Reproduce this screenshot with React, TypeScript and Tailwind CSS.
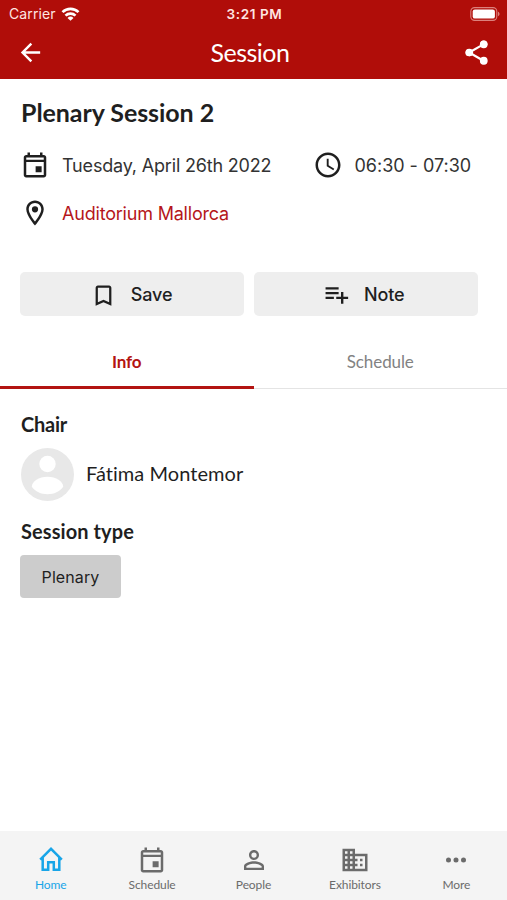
import type { ReactNode } from 'react';

const CALENDAR =
  'M19 4h-1V2h-2v2H8V2H6v2H5c-1.11 0-1.99.9-1.99 2L3 20c0 1.1.89 2 2 2h14c1.1 0 2-.9 2-2V6c0-1.1-.9-2-2-2zm0 16H5V9.6h14V20zm0-12.2H5V6h14v1.8zM12.5 13h4.8v4.8h-4.8V13z';
const PIN =
  'M12 2C8.13 2 5 5.13 5 9c0 5.25 7 13 7 13s7-7.75 7-13c0-3.87-3.13-7-7-7zM7 9c0-2.76 2.24-5 5-5s5 2.24 5 5c0 2.88-2.88 7.19-5 9.88C9.92 16.21 7 11.85 7 9zm5-2.5a2.5 2.5 0 1 0 0 5 2.5 2.5 0 0 0 0-5z';
const CLOCK =
  'M11.99 2C6.47 2 2 6.48 2 12s4.47 10 9.99 10C17.52 22 22 17.52 22 12S17.52 2 11.99 2zM12 20c-4.42 0-8-3.58-8-8s3.58-8 8-8 8 3.58 8 8-3.58 8-8 8zm.5-13H11v6l5.25 3.15.75-1.23-4.5-2.67V7z';
const BOOKMARK =
  'M17 3H7c-1.1 0-1.99.9-1.99 2L5 21l7-3 7 3V5c0-1.1-.9-2-2-2zm0 15l-5-2.18L7 18V5h10v13z';
const PLAYLIST_ADD =
  'M14 10H3v2h11v-2zm0-4H3v2h11V6zm4 8v-4h-2v4h-4v2h4v4h2v-4h4v-2h-4zM3 16h7v-2H3v2z';
const BACK = 'M20 11H7.83l5.59-5.59L12 4l-8 8 8 8 1.41-1.41L7.83 13H20v-2z';
const SHARE =
  'M18 16.08c-.76 0-1.44.3-1.96.77L8.91 12.7c.05-.23.09-.46.09-.7s-.04-.47-.09-.7l7.05-4.11c.54.5 1.25.81 2.04.81 1.66 0 3-1.34 3-3s-1.34-3-3-3-3 1.34-3 3c0 .24.04.47.09.7L8.04 9.81C7.5 9.31 6.79 9 6 9c-1.66 0-3 1.34-3 3s1.34 3 3 3c.79 0 1.5-.31 2.04-.81l7.12 4.16c-.05.21-.08.43-.08.65 0 1.61 1.31 2.92 2.92 2.92s2.92-1.31 2.92-2.92-1.31-2.92-2.92-2.92z';
const PERSON =
  'M12 5.9a2.1 2.1 0 1 1 0 4.2 2.1 2.1 0 0 1 0-4.2m0 9c2.97 0 6.1 1.46 6.1 2.1v1.1H5.9V17c0-.64 3.13-2.1 6.1-2.1M12 4C9.79 4 8 5.79 8 8s1.79 4 4 4 4-1.79 4-4-1.79-4-4-4zm0 9c-2.67 0-8 1.34-8 4v3h16v-3c0-2.66-5.33-4-8-4z';
const BUILDING =
  'M12 7V3H2v18h20V7H12zM6 19H4v-2h2v2zm0-4H4v-2h2v2zm0-4H4V9h2v2zm0-4H4V5h2v2zm4 12H8v-2h2v2zm0-4H8v-2h2v2zm0-4H8V9h2v2zm0-4H8V5h2v2zm10 12h-8v-2h2v-2h-2v-2h2v-2h-2V9h8v10zm-2-8h-2v2h2v-2zm0 4h-2v2h2v-2z';
const DOTS =
  'M6 10a2 2 0 1 0 0 4 2 2 0 0 0 0-4zm6 0a2 2 0 1 0 0 4 2 2 0 0 0 0-4zm6 0a2 2 0 1 0 0 4 2 2 0 0 0 0-4z';

function Icon({ d, className = 'size-[30px]' }: { d: string; className?: string }) {
  return (
    <svg viewBox="0 0 24 24" fill="currentColor" className={`shrink-0 ${className}`}>
      <path d={d} />
    </svg>
  );
}

function HomeIcon() {
  return (
    <svg viewBox="0 0 30 30" fill="none" stroke="currentColor" strokeWidth="2.5" className="size-[30px]">
      <path d="M4.2 14.6 15 3.8l10.8 10.8M6.7 12.4v12.4h5.5v-7.6h5.6v7.6h5.5V12.4" />
    </svg>
  );
}

function NavItem({ label, active, children }: { label: string; active?: boolean; children: ReactNode }) {
  return (
    <a className={`flex flex-1 flex-col items-center pt-[14px] ${active ? 'text-[#18a5e8]' : 'text-[#6b6b6b]'}`}>
      <span className="flex h-[29px] items-center">{children}</span>
      <span className="mt-[3px] text-[12px] leading-[16px] tracking-[-0.1px] whitespace-nowrap">{label}</span>
    </a>
  );
}

export default function App() {
  return (
    <div className="flex h-[900px] w-[507px] flex-col overflow-hidden bg-white font-['Lato',sans-serif] text-[#1f1f1f]">
      <header className="h-[79px] bg-[#b00d09] text-white">
        <div className="grid h-[27px] grid-cols-3 items-center pr-[7px] pl-[9px] font-['Inter',sans-serif] text-[13.5px] text-[#ffe5e2]">
          <div className="flex items-center gap-[5px]">
            <span className="text-[14px] tracking-[0.1px]">Carrier</span>
            <svg viewBox="0 0 18 14" className="h-[14px] w-[19px]" fill="none" stroke="white" strokeWidth="2.7">
              <path d="M1 5.1a11.5 11.5 0 0 1 16 0M4 8.6a7.2 7.2 0 0 1 10 0" />
              <path d="M9 13.8 6 10.9a4.3 4.3 0 0 1 6 0z" fill="white" stroke="none" />
            </svg>
          </div>
          <span className="pt-px text-center font-semibold tracking-[0.6px]">3:21 PM</span>
          <svg viewBox="0 0 30 14" className="h-[14px] w-[30px] justify-self-end">
            <rect x="0.8" y="0.6" width="26" height="12.8" rx="3.8" fill="none" stroke="#dc817d" strokeWidth="1.1" />
            <rect x="2.7" y="2.4" width="22.2" height="9.2" rx="2.2" fill="white" />
            <path d="M28 4.8c2 .7 2 3.7 0 4.4z" fill="#dc817d" />
          </svg>
        </div>
        <div className="flex h-[50px] items-center justify-between px-[16px]">
          <Icon d={BACK} className="size-[29px]" />
          <h1 className="pr-[7px] text-[25px] leading-[30px] tracking-[-0.5px]">Session</h1>
          <svg viewBox="0 0 24 24" fill="currentColor" className="size-[29px]">
            <path d={SHARE} />
            <circle cx="18" cy="5.2" r="3.2" />
            <circle cx="6" cy="12" r="3.2" />
            <circle cx="18" cy="18.8" r="3.2" />
          </svg>
        </div>
      </header>

      <main className="flex-1">
        <section className="px-5 pt-[18px]">
          <h2 className="pl-px text-[25px] leading-[30px] font-bold tracking-[-0.06px] whitespace-nowrap">Plenary Session 2</h2>
          <div className="mt-[23px] flex h-[30px] items-center font-['Inter',sans-serif] text-[18px] whitespace-nowrap text-[#333]">
            <Icon d={CALENDAR} className="size-[30px] text-[#1f1f1f]" />
            <span className="ml-[12px] w-[250.5px] tracking-[-0.18px]">Tuesday, April 26th 2022</span>
            <Icon d={CLOCK} className="size-[30px] text-[#1f1f1f]" />
            <span className="ml-[12px] tracking-[-0.02px]">06:30 - 07:30</span>
          </div>
          <div className="mt-[18px] flex h-[30px] items-center font-['Inter',sans-serif] text-[18px] tracking-[-0.2px] whitespace-nowrap text-[#b5161b]">
            <Icon d={PIN} className="size-[30px] text-[#1f1f1f]" />
            <span className="ml-[12px]">Auditorium Mallorca</span>
          </div>
          <div className="mt-[44px] flex gap-[10px] font-['Inter',sans-serif] text-[18px] font-medium">
            <button className="flex h-11 w-[224px] items-center justify-center gap-[14px] rounded-[5px] bg-[#eee] pr-[2px]">
              <Icon d={BOOKMARK} className="mt-[2px] size-[27px]" />
              <span className="tracking-[-0.1px]">Save</span>
            </button>
            <button className="flex h-11 w-[224px] items-center justify-center gap-[13px] rounded-[5px] bg-[#eee] pr-[5px]">
              <Icon d={PLAYLIST_ADD} className="size-[28.5px]" />
              <span className="tracking-[-0.1px]">Note</span>
            </button>
          </div>
        </section>

        <nav className="mt-[19px] grid h-[54px] grid-cols-2 border-b border-[#e4e4e4] text-[17px]">
          <div className="-mb-px flex items-center justify-center border-b-[3px] border-[#b31412] pt-[2px] font-bold tracking-[-0.1px] text-[#b31412]">Info</div>
          <div className="flex items-center justify-center pt-px tracking-[-0.1px] text-[#828282]">Schedule</div>
        </nav>

        <section className="px-[21px] pt-[22px]">
          <h3 className="text-[20px] leading-[26px] font-bold tracking-[-0.25px]">Chair</h3>
          <div className="mt-[11px] flex h-[53px] items-center gap-[12px]">
            <svg viewBox="0 0 53 53" className="size-[53px]">
              <circle cx="26.5" cy="26.5" r="26.5" fill="#e8e8e8" />
              <circle cx="26.5" cy="16" r="8.2" fill="white" />
              <path d="M10.8 38.7c0-5.2 7.2-10 15.7-10s15.7 4.8 15.7 10c-3.6 4.8-9 7.5-15.7 7.5s-12.1-2.7-15.7-7.5z" fill="white" />
            </svg>
            <span className="pb-[4px] text-[20px] tracking-[0.05px] [font-variant-ligatures:none]">Fátima Montemor</span>
          </div>
          <h3 className="mt-[17px] text-[20px] leading-[26px] font-bold tracking-[0.08px]">Session type</h3>
          <span className="mt-[11px] -ml-px flex h-[43px] w-[101px] items-center justify-center rounded-[4px] bg-[#ccc] font-['Inter',sans-serif] text-[16px] tracking-[0.1px]">
            Plenary
          </span>
        </section>
      </main>

      <footer className="flex h-[69px] bg-[#f4f4f4]">
        <NavItem label="Home" active>
          <HomeIcon />
        </NavItem>
        <NavItem label="Schedule">
          <Icon d={CALENDAR} />
        </NavItem>
        <NavItem label="People">
          <Icon d={PERSON} />
        </NavItem>
        <NavItem label="Exhibitors">
          <Icon d={BUILDING} />
        </NavItem>
        <NavItem label="More">
          <Icon d={DOTS} />
        </NavItem>
      </footer>
    </div>
  );
}
